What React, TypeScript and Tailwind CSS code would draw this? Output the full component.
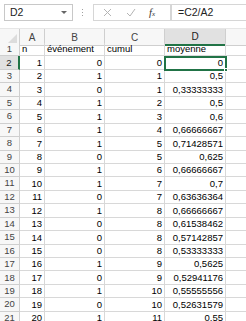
const rows: [number, number, number, string][] = [
  [1, 0, 0, "0"],
  [2, 1, 1, "0,5"],
  [3, 0, 1, "0,33333333"],
  [4, 1, 2, "0,5"],
  [5, 1, 3, "0,6"],
  [6, 1, 4, "0,66666667"],
  [7, 1, 5, "0,71428571"],
  [8, 0, 5, "0,625"],
  [9, 1, 6, "0,66666667"],
  [10, 1, 7, "0,7"],
  [11, 0, 7, "0,63636364"],
  [12, 1, 8, "0,66666667"],
  [13, 0, 8, "0,61538462"],
  [14, 0, 8, "0,57142857"],
  [15, 0, 8, "0,53333333"],
  [16, 1, 9, "0,5625"],
  [17, 0, 9, "0,52941176"],
  [18, 1, 10, "0,55555556"],
  [19, 0, 10, "0,52631579"],
  [20, 1, 11, "0,55"],
];

const cell = "border-r border-b border-[#d8d8d8] px-[2px] leading-none flex items-center overflow-hidden whitespace-nowrap";

export default function App() {
  return (
    <div className="w-[246px] h-[321px] overflow-hidden bg-white text-[9.5px] text-black font-['Liberation_Sans',Arial,sans-serif]">
      {/* formula bar */}
      <div className="h-[29px] flex items-start pt-[4px] border-b border-[#e6e6e6]">
        <div className="ml-[4px] w-[69px] h-[17px] border border-[#c8c8c8] flex items-center justify-between pl-[5px] pr-[5px] text-[10.5px] text-[#222]">
          <span>D2</span>
          <span className="w-0 h-0 border-l-[3px] border-r-[3px] border-t-[3px] border-l-transparent border-r-transparent border-t-[#666]" />
        </div>
        <div className="ml-[9px] h-[17px] flex flex-col justify-center gap-[2px]">
          <span className="w-[1px] h-[1px] bg-[#a0a0a0]" />
          <span className="w-[1px] h-[1px] bg-[#a0a0a0]" />
          <span className="w-[1px] h-[1px] bg-[#a0a0a0]" />
        </div>
        <div className="ml-[10px] w-[78px] h-[17px] border border-[#d6d6d6] flex items-center">
          <svg width="9" height="9" viewBox="0 0 9 9" className="ml-[9px]">
            <path d="M1 1L8 8M8 1L1 8" stroke="#b4b4b4" strokeWidth="1" />
          </svg>
          <svg width="10" height="9" viewBox="0 0 10 9" className="ml-[14px]">
            <path d="M1 5L4 8L9 1" stroke="#b4b4b4" strokeWidth="1" fill="none" />
          </svg>
          <span className="ml-[13px] font-['Liberation_Serif',serif] italic text-[10.5px] text-[#333]">
            f<span className="text-[7px]">x</span>
          </span>
        </div>
        <div className="flex-1 h-[17px] border border-l-[#d6d6d6] border-y-[#d6d6d6] border-r-0 flex items-center pl-[6px] text-[10.5px] text-[#222]">
          =C2/A2
        </div>
      </div>

      {/* sheet */}
      <div className="relative">
        <div className="grid grid-cols-[20px_25px_60px_60px_61px_1fr] h-[14px] text-[#444] text-[10px]">
          <div className="border-r border-b border-[#cfcfcf] bg-[#f7f7f7] flex items-end justify-end pr-[2px] pb-[2px]">
            <span className="w-0 h-0 [border-bottom:9px_solid_#dcdcdc] [border-left:9px_solid_transparent]" />
          </div>
          <div className="border-r border-b border-[#cfcfcf] bg-[#f7f7f7] flex items-center justify-center">A</div>
          <div className="border-r border-b border-[#cfcfcf] bg-[#f7f7f7] flex items-center justify-center">B</div>
          <div className="border-r border-b border-[#cfcfcf] bg-[#f7f7f7] flex items-center justify-center">C</div>
          <div className="border-r border-[#cfcfcf] border-b-2 border-b-[#217346] bg-[#e1e1e1] flex items-center justify-center text-[#222]">D</div>
          <div className="border-b border-[#cfcfcf] bg-[#f7f7f7]" />
        </div>

        <div className="grid grid-cols-[20px_25px_60px_60px_61px_1fr] auto-rows-[13.45px]">
          <div className="border-r border-b border-[#cfcfcf] bg-[#f7f7f7] text-[#444] flex items-center justify-center">1</div>
          <div className={cell}>n</div>
          <div className={cell}>événement</div>
          <div className={cell}>cumul</div>
          <div className={cell}>moyenne</div>
          <div className="border-b border-[#d8d8d8]" />
          {rows.map(([n, e, c, m], i) => (
            <Row key={n} idx={i + 2} n={n} e={e} c={c} m={m} />
          ))}
        </div>

        {/* active cell D2 */}
        <div className="absolute left-[164px] top-[27px] w-[63px] h-[15px] border-2 border-[#217346] pointer-events-none">
          <span className="absolute -right-[3px] -bottom-[3px] w-[4px] h-[4px] bg-[#217346] border border-white" />
        </div>
      </div>
    </div>
  );
}

function Row({ idx, n, e, c, m }: { idx: number; n: number; e: number; c: number; m: string }) {
  const active = idx === 2;
  return (
    <>
      <div
        className={
          active
            ? "border-r-2 border-r-[#217346] border-b border-b-[#cfcfcf] bg-[#e1e1e1] text-[#222] flex items-center justify-center"
            : "border-r border-b border-[#cfcfcf] bg-[#f7f7f7] text-[#444] flex items-center justify-center"
        }
      >
        {idx}
      </div>
      <div className={cell + " justify-end"}>{n}</div>
      <div className={cell + " justify-end"}>{e}</div>
      <div className={cell + " justify-end"}>{c}</div>
      <div className={cell + " justify-end"}>{m}</div>
      <div className="border-b border-[#d8d8d8]" />
    </>
  );
}
